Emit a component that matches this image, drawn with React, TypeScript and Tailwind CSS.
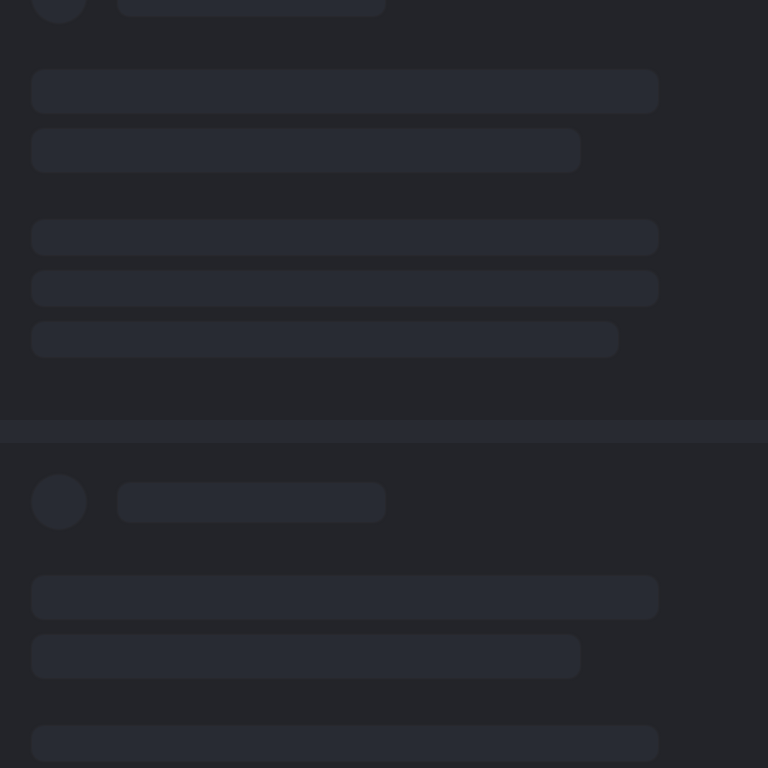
import React from 'react';

const Bar = ({ className }: { className: string }) => (
  <div className={`rounded-xl bg-[#282b33] shadow-[0_0_2px_1px_#2a2b30] ${className}`} />
);

const SkeletonCard = () => {
  return (
    <div className="px-8 pt-8 pb-[63px]">
      <div className="flex items-center gap-8">
        <div className="w-[54px] h-[54px] rounded-full bg-[#282b33] shadow-[0_0_2px_1px_#2a2b30] shrink-0" />
        <Bar className="w-[267px] h-[39px]" />
      </div>

      <div className="flex flex-col gap-4 mt-[47px]">
        <Bar className="w-[626px] h-[43px]" />
        <Bar className="w-[548px] h-[43px]" />
      </div>

      <div className="flex flex-col gap-4 mt-12">
        <Bar className="w-[626px] h-[35px]" />
        <Bar className="w-[626px] h-[35px]" />
        <Bar className="w-[586px] h-[35px]" />
      </div>
    </div>
  );
};

export default function App() {
  return (
    <div className="h-[768px] w-full overflow-hidden bg-[#232429]">
      <div className="-mt-[63px]">
        <SkeletonCard />
        <div className="h-[23px] bg-[#282a31]" />
        <SkeletonCard />
      </div>
    </div>
  );
}
